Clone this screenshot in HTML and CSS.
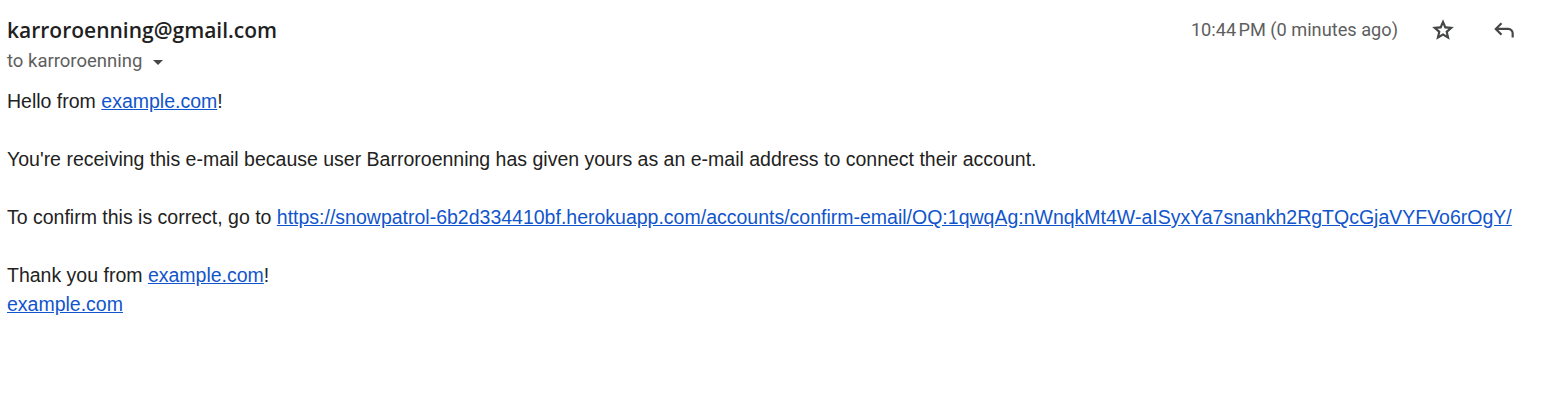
FILE: index.html
```html
<!DOCTYPE html>
<html>
<head>
<meta charset="utf-8">
<link rel="stylesheet" href="styles.css">
</head>
<body>
<div class="mail">
  <div class="header">
    <div class="sender">
      <div class="from">karroroenning@gmail.com</div>
      <div class="to">to karroroenning <span class="caret"></span></div>
    </div>
    <div class="meta">
      <span class="time">10:44&#8239;PM (0 minutes ago)</span>
      <span class="icon star">
        <svg width="26" height="26" viewBox="0 -960 960 960"><path fill="#444746" d="m354-287 126-76 126 77-33-144 111-96-146-13-58-136-58 135-146 13 111 97-33 143ZM233-120l65-281L80-590l288-25 112-265 112 265 288 25-218 189 65 281-247-149-247 149Z"/></svg>
      </span>
      <span class="icon reply">
        <svg width="26" height="26" viewBox="0 -960 960 960"><path fill="#444746" d="M760-200v-160q0-50-35-85t-85-35H273l144 144-57 56-240-240 240-240 57 56-144 144h367q83 0 141.5 58.5T840-360v160h-80Z"/></svg>
      </span>
    </div>
  </div>
  <div class="body">
    Hello from <a href="#">example.com</a>!<br><br>
    You're receiving this e-mail because user Barroroenning has given yours as an e-mail address to connect their account.<br><br>
    To confirm this is correct, go to <a href="#">https://snowpatrol-6b2d334410bf.herokuapp.com/accounts/confirm-email/OQ:1qwqAg:nWnqkMt4W-aISyxYa7snankh2RgTQcGjaVYFVo6rOgY/</a><br><br>
    Thank you from <a href="#">example.com</a>!<br>
    <a href="#">example.com</a>
  </div>
</div>
</body>
</html>
```

FILE: styles.css
```css
html, body {
  margin: 0;
  padding: 0;
  background: #fff;
}
.mail {
  padding: 16px 0 0 7px;
}
.header {
  display: flex;
  justify-content: space-between;
  align-items: flex-start;
}
.from {
  font-family: "Open Sans", Roboto, sans-serif;
  font-weight: 600;
  font-size: 21px;
  color: #1f1f1f;
  line-height: 28px;
}
.to {
  font-family: Roboto, "Liberation Sans", sans-serif;
  font-size: 18.5px;
  color: #5e5e5e;
  line-height: 24px;
  margin-top: 5px;
  display: flex;
  align-items: center;
}
.caret {
  display: inline-block;
  width: 0;
  height: 0;
  border-left: 5px solid transparent;
  border-right: 5px solid transparent;
  border-top: 5px solid #444746;
  margin-left: 11px;
  margin-top: 2px;
}
.meta {
  display: flex;
  align-items: center;
  padding-right: 28px;
}
.time {
  font-family: Roboto, "Liberation Sans", sans-serif;
  font-size: 18.2px;
  color: #5e5e5e;
  line-height: 28px;
}
.icon {
  display: flex;
  width: 26px;
  height: 26px;
  margin-left: 32px;
}
.icon.reply {
  margin-left: 35px;
}
.body {
  font-family: "Liberation Sans", Arial, sans-serif;
  font-size: 19.5px;
  color: #222;
  line-height: 29px;
  margin-top: 14px;
}
.body a {
  color: #1155cc;
}
```
